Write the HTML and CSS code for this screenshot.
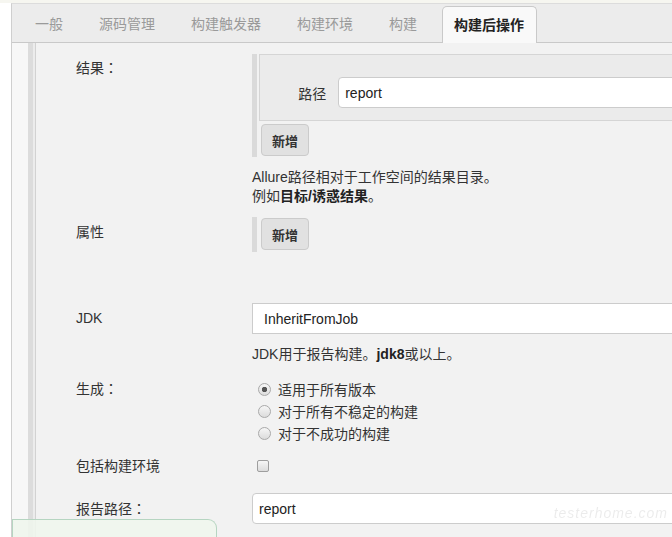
FILE: index.html
```html
<!DOCTYPE html>
<html lang="zh-CN">
<head>
    <meta charset="UTF-8">
    <meta name="viewport" content="width=device-width, initial-scale=1.0">
    <title>构建后操作</title>
    <link rel="stylesheet" href="styles.css">
</head>
<body>
    <div class="topline"></div>
    <div class="frame">
        <div class="tabs">
            <div class="tab">一般</div>
            <div class="tab">源码管理</div>
            <div class="tab">构建触发器</div>
            <div class="tab">构建环境</div>
            <div class="tab">构建</div>
            <div class="tab active">构建后操作</div>
        </div>

        <div class="page">
            <div class="gutter"></div>
            <div class="rail"></div>
            <div class="main">
                <div class="row row-results">
                    <div class="label">结果<span class="colon" lang="zh-TW">：</span></div>
                    <div class="field">
                        <div class="repeat">
                            <div class="repeat-item">
                                <label class="sub-label">路径</label>
                                <input class="text" type="text" value="report">
                            </div>
                            <button class="add">新增</button>
                        </div>
                        <div class="help">Allure路径相对于工作空间的结果目录。<br>例如<b>目标/诱惑结果</b>。</div>
                    </div>
                </div>

                <div class="row row-props">
                    <div class="label">属性</div>
                    <div class="field">
                        <div class="repeat repeat-empty">
                            <button class="add">新增</button>
                        </div>
                    </div>
                </div>

                <div class="row row-jdk">
                    <div class="label">JDK</div>
                    <div class="field">
                        <select class="select">
                            <option>InheritFromJob</option>
                        </select>
                        <div class="help">JDK用于报告构建。<b>jdk8</b>或以上。</div>
                    </div>
                </div>

                <div class="row row-build">
                    <div class="label">生成<span class="colon" lang="zh-TW">：</span></div>
                    <div class="field">
                        <label class="option"><input type="radio" name="build" checked>适用于所有版本</label>
                        <label class="option"><input type="radio" name="build">对于所有不稳定的构建</label>
                        <label class="option"><input type="radio" name="build">对于不成功的构建</label>
                    </div>
                </div>

                <div class="row row-env">
                    <div class="label">包括构建环境</div>
                    <div class="field">
                        <label class="option"><input type="checkbox"></label>
                    </div>
                </div>

                <div class="row row-report">
                    <div class="label">报告路径<span class="colon" lang="zh-TW">：</span></div>
                    <div class="field">
                        <input class="text text-wide" type="text" value="report">
                    </div>
                </div>
            </div>
        </div>
    </div>

    <div class="bottom-bar"></div>
    <div class="watermark">testerhome.com</div>
</body>
</html>
```

FILE: styles.css
```css
body {
    margin: 0;
    overflow: hidden;
    background-color: #fff;
    font-family: "Liberation Sans", "Noto Sans CJK SC", sans-serif;
    font-size: 14px;
    color: #333;
}
.topline {
    height: 3px;
    background-color: #f6f6f0;
}
.frame {
    margin-left: 11px;
    border-left: 1px solid #cfcfcf;
    border-top: 1px solid #dcdcdc;
    height: calc(100vh - 4px);
    display: flex;
    flex-direction: column;
}

/* tabs */
.tabs {
    display: flex;
    align-items: flex-end;
    height: 38px;
    padding-left: 12px;
    background-color: #ececec;
    border-bottom: 1px solid #c9c9c9;
    flex-shrink: 0;
}
.tab {
    height: 37px;
    line-height: 37px;
    padding: 0 11px;
    margin-right: 14px;
    margin-bottom: -1px;
    color: #9a9a9a;
    white-space: nowrap;
}
.tab.active {
    height: 36px;
    line-height: 36px;
    padding: 0 12px 0 11px;
    background-color: #f9f9f9;
    border: 1px solid #c9c9c9;
    border-bottom: none;
    border-radius: 5px 5px 0 0;
    color: #222;
    font-weight: bold;
}

/* page body */
.page {
    flex: 1;
    display: flex;
}
.gutter {
    flex-shrink: 0;
    width: 16px;
    background-color: #f7f7f7;
    border-right: 5px solid #dcdcdc;
}
.rail {
    flex-shrink: 0;
    width: 2px;
    background-color: #ececec;
    border-right: 1px solid #d2d2d2;
}
.main {
    flex: 1;
    min-width: 0;
    background-color: #f2f2f2;
    padding-left: 40px;
}
.row {
    display: grid;
    grid-template-columns: 176px 640px;
}
.label {
    line-height: 19px;
}
.colon {
    font-family: "Noto Sans CJK TC", sans-serif;
}
.help {
    line-height: 19px;
    margin-top: 11px;
}
.help b {
    color: #222;
}

.row-results { margin-top: 11px; }
.row-results .label { padding-top: 4px; }
.row-props { margin-top: 11px; }
.row-props .label { padding-top: 6px; }
.row-jdk { margin-top: 51px; }
.row-jdk .label { padding-top: 6px; }
.row-build { margin-top: 14px; }
.row-build .label { padding-top: 1px; }
.row-env { margin-top: 11px; }
.row-env .label { padding-top: 2px; }
.row-report { margin-top: 16px; }
.row-report .label { padding-top: 6px; }

/* repeatable block */
.repeat {
    border-left: 5px solid #dadada;
    padding: 0 0 1px 2px;
}
.repeat-empty {
    padding-top: 1px;
    padding-bottom: 2px;
}
.repeat-item {
    display: flex;
    align-items: center;
    background-color: #ebebeb;
    border: 1px solid #d5d5d5;
    padding: 22px 0 12px;
}
.sub-label {
    width: 72px;
    margin-right: 12px;
    text-align: right;
}
.text {
    box-sizing: border-box;
    height: 31px;
    width: 600px;
    padding: 0 6px;
    border: 1px solid #cccccc;
    border-radius: 4px;
    background-color: #fff;
    font-family: "Liberation Sans", "Noto Sans CJK SC", sans-serif;
    font-size: 14px;
    color: #222;
}
.add {
    display: block;
    margin: 3px 0 0 2px;
    height: 32px;
    padding: 0 10px;
    background-color: #e1e1e1;
    border: 1px solid #cbcbcb;
    border-radius: 4px;
    font-family: "Liberation Sans", "Noto Sans CJK SC", sans-serif;
    font-size: 13px;
    font-weight: bold;
    color: #333;
}
.repeat-empty .add {
    margin-top: 0;
}
.select {
    appearance: none;
    display: block;
    box-sizing: border-box;
    width: 640px;
    height: 31px;
    padding: 0 11px;
    border: 1px solid #cccccc;
    border-radius: 0;
    background-color: #fff;
    font-family: "Liberation Sans", "Noto Sans CJK SC", sans-serif;
    font-size: 14px;
    color: #222;
}

/* radios and checkbox */
.option {
    display: flex;
    align-items: center;
    height: 22px;
}
.option input {
    appearance: none;
    margin: 0 7px 0 6px;
    width: 13px;
    height: 13px;
    border: 1px solid #a9a9a9;
    background: linear-gradient(#f6f6f6, #dcdcdc);
    box-sizing: border-box;
}
.option input[type="radio"] {
    border-radius: 50%;
}
.option input[type="radio"]:checked {
    background: radial-gradient(circle, #555 0 2.4px, transparent 3px), linear-gradient(#f6f6f6, #dcdcdc);
}
.option input[type="checkbox"] {
    width: 12px;
    height: 12px;
    margin-left: 5px;
    border-radius: 2px;
    border-color: #9e9e9e;
}

/* overlays */
.bottom-bar {
    position: fixed;
    left: 12px;
    bottom: 0;
    width: 203px;
    height: 17px;
    border: 1px solid #b6d5c1;
    border-bottom: none;
    border-top-right-radius: 9px;
    background-color: rgba(239, 246, 237, 0.88);
}
.watermark {
    position: fixed;
    right: 4px;
    bottom: 16px;
    font-size: 14px;
    font-style: italic;
    letter-spacing: 1px;
    color: rgba(0, 0, 0, 0.08);
}
```
